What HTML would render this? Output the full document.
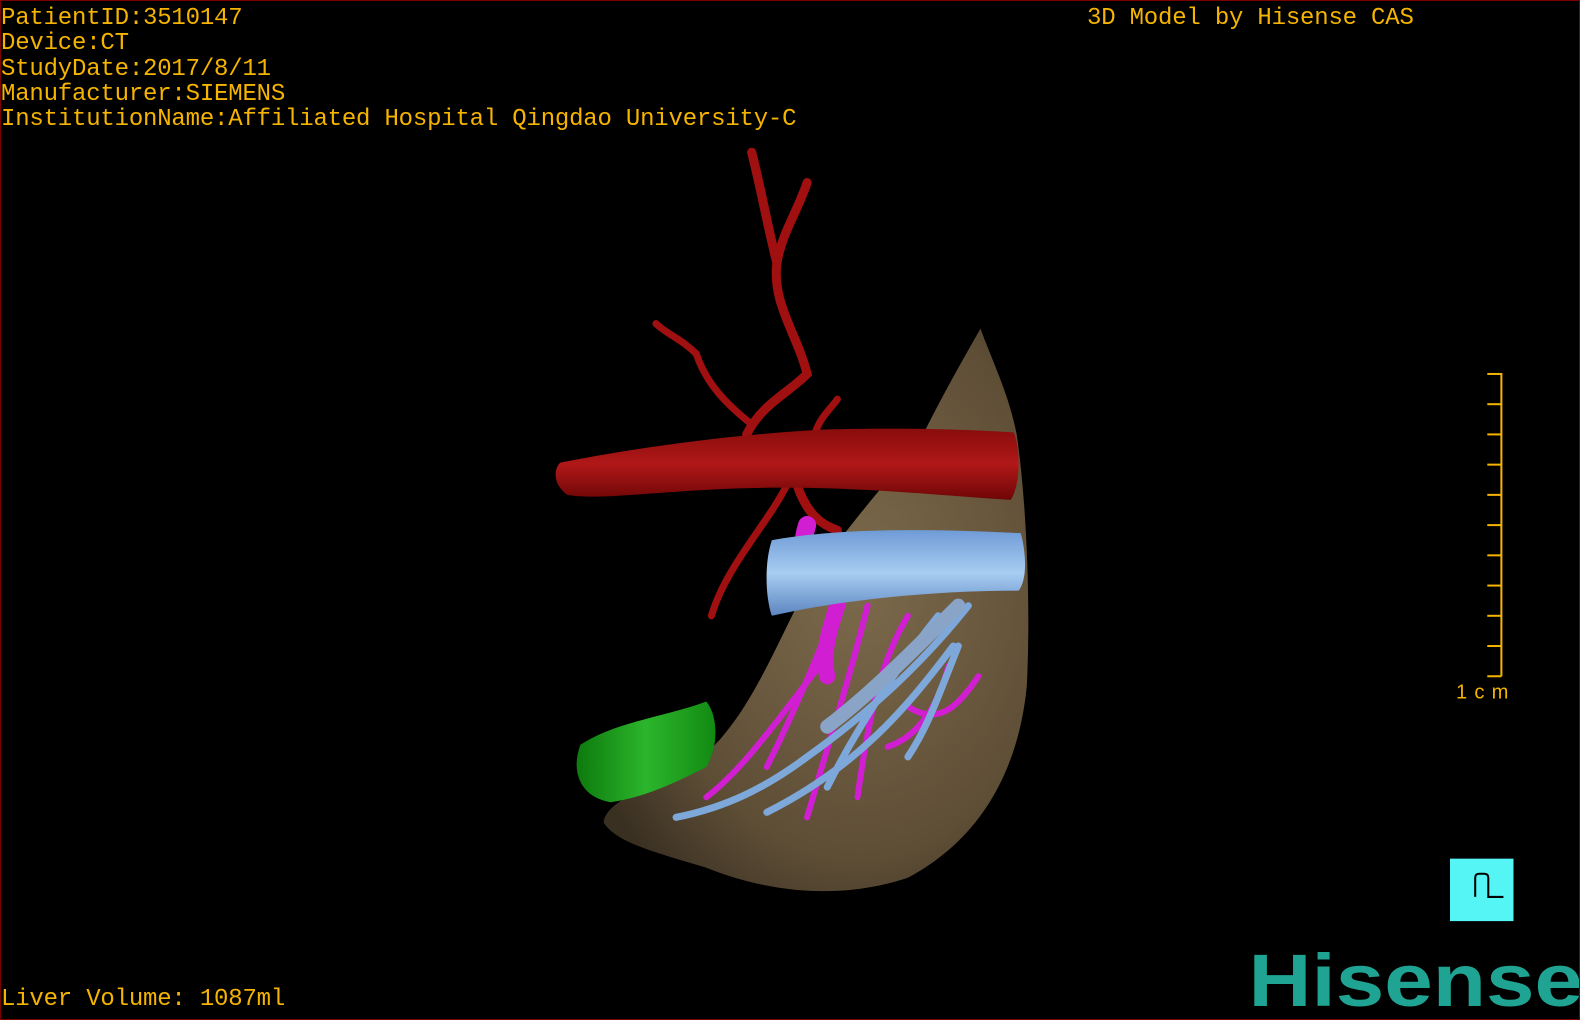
<!DOCTYPE html>
<html><head><meta charset="utf-8"><style>
html,body{margin:0;padding:0;background:#000;}
#w{position:relative;width:1578px;height:1018px;border:1px solid #7a0000;overflow:hidden;background:#000;}
.t{position:absolute;font-family:"Liberation Mono",monospace;font-size:24px;color:#f5b400;white-space:pre;line-height:25.3px;letter-spacing:-0.2px;}
svg{position:absolute;left:0;top:0;}
</style></head><body><div id="w">
<svg width="1580" height="1020" viewBox="0 0 1568 1012">
<defs>
<radialGradient id="lv" cx="0.6" cy="0.45" r="0.7"><stop offset="0" stop-color="#7d6a4c"/><stop offset="0.7" stop-color="#5e4e36"/><stop offset="1" stop-color="#3a3022"/></radialGradient>
<linearGradient id="ao" x1="0" y1="0" x2="0" y2="1"><stop offset="0" stop-color="#8a0c0c"/><stop offset="0.5" stop-color="#b01818"/><stop offset="1" stop-color="#6e0606"/></linearGradient>
<linearGradient id="vc" x1="0" y1="0" x2="0" y2="1"><stop offset="0" stop-color="#6f9bd6"/><stop offset="0.5" stop-color="#a8cdf2"/><stop offset="1" stop-color="#5c86c0"/></linearGradient>
<linearGradient id="gb" x1="0" y1="0" x2="1" y2="0"><stop offset="0" stop-color="#0d7a0d"/><stop offset="0.5" stop-color="#2cb52c"/><stop offset="1" stop-color="#128a12"/></linearGradient>
</defs>
<path d="M972,325 C985,360 1000,390 1008,430 C1018,500 1022,600 1018,680 C1010,760 975,830 900,870 C840,890 770,888 700,860 C650,845 610,835 598,815 C600,795 640,780 690,755 C735,720 760,660 790,600 C820,540 880,480 915,430 C935,390 955,355 972,325 Z" fill="url(#lv)"/>
<g fill="none" stroke="#a01010" stroke-linecap="round">
<path d="M740,430 C755,400 780,390 800,370 C790,330 765,300 770,260 C775,230 790,210 800,180 M770,260 C760,220 755,190 745,150" stroke-width="9"/>
<path d="M745,420 C720,400 700,380 690,350 C675,335 660,330 650,320" stroke-width="7"/>
<path d="M805,470 C800,420 820,410 830,395" stroke-width="7"/>
<path d="M780,480 C760,520 720,560 705,610" stroke-width="7"/>
<path d="M790,480 C800,510 815,520 830,525" stroke-width="9"/>
</g>
<path d="M555,458 C620,445 720,430 820,425 C900,423 960,425 1005,428 C1012,445 1012,480 1002,495 C920,490 820,478 700,485 C640,488 590,495 562,490 C548,480 548,465 555,458 Z" fill="url(#ao)"/>
<g stroke-linecap="round" fill="none">
<path d="M830,600 C810,650 790,700 760,760 M860,600 C840,680 820,740 800,810 M900,610 C870,660 860,720 850,790 M940,660 C930,700 910,730 880,740 M820,650 C780,700 740,760 700,790 M900,700 C930,720 950,700 970,670" stroke="#d21ed2" stroke-width="6"/>
<path d="M800,520 C790,550 805,560 830,560" stroke="#d21ed2" stroke-width="18"/>
<path d="M830,600 C820,630 815,650 820,670" stroke="#d21ed2" stroke-width="16"/>
<path d="M960,600 C920,650 870,700 800,750 C760,780 720,800 670,810 M930,610 C890,660 850,720 820,780 M945,640 C900,700 850,760 760,805 M950,640 C930,690 920,720 900,750" stroke="#7ea8da" stroke-width="7"/>
<path d="M950,600 C900,650 860,690 820,720" stroke="#8aa4c8" stroke-width="14"/>
</g>
<path d="M765,535 C820,525 900,522 1012,528 C1018,550 1018,575 1010,585 C920,585 830,595 765,610 C758,590 758,555 765,535 Z" fill="url(#vc)"/>
<path d="M575,738 C610,715 660,710 700,695 C712,710 712,740 700,760 C670,775 640,790 605,795 C575,790 565,765 575,738 Z" fill="url(#gb)"/>
<rect x="1438" y="851" width="63" height="62" fill="#55f5f5"/>
<path d="M1463,889 V870 Q1463,866 1467,866 H1472 Q1476,866 1476,870 V889 H1491" stroke="#000" stroke-width="2" fill="none"/>
<g stroke="#f5b400" stroke-width="2"><line x1="1489" y1="369" x2="1489" y2="670"/>
<line x1="1475" y1="370" x2="1489" y2="370"/><line x1="1475" y1="400" x2="1489" y2="400"/><line x1="1475" y1="430" x2="1489" y2="430"/><line x1="1475" y1="460" x2="1489" y2="460"/><line x1="1475" y1="490" x2="1489" y2="490"/><line x1="1475" y1="520" x2="1489" y2="520"/><line x1="1475" y1="550" x2="1489" y2="550"/><line x1="1475" y1="580" x2="1489" y2="580"/><line x1="1475" y1="610" x2="1489" y2="610"/><line x1="1475" y1="640" x2="1489" y2="640"/><line x1="1475" y1="670" x2="1489" y2="670"/></g>
<text x="1444" y="692" font-family="Liberation Sans,sans-serif" font-size="20" fill="#f5b400" textLength="52" lengthAdjust="spacing">1cm</text>
<text x="1238" y="997" font-family="Liberation Sans,sans-serif" font-weight="bold" font-size="74" fill="#1fa392" textLength="332" lengthAdjust="spacingAndGlyphs">Hisense</text>
</svg>
<div class="t" style="left:0;top:5px">PatientID:3510147
Device:CT
StudyDate:2017/8/11
Manufacturer:SIEMENS
InstitutionName:Affiliated Hospital Qingdao University-C</div>
<div class="t" style="left:1086px;top:5px">3D Model by Hisense CAS</div>
<div class="t" style="left:0;top:986px">Liver Volume: 1087ml</div>
</div></body></html>
